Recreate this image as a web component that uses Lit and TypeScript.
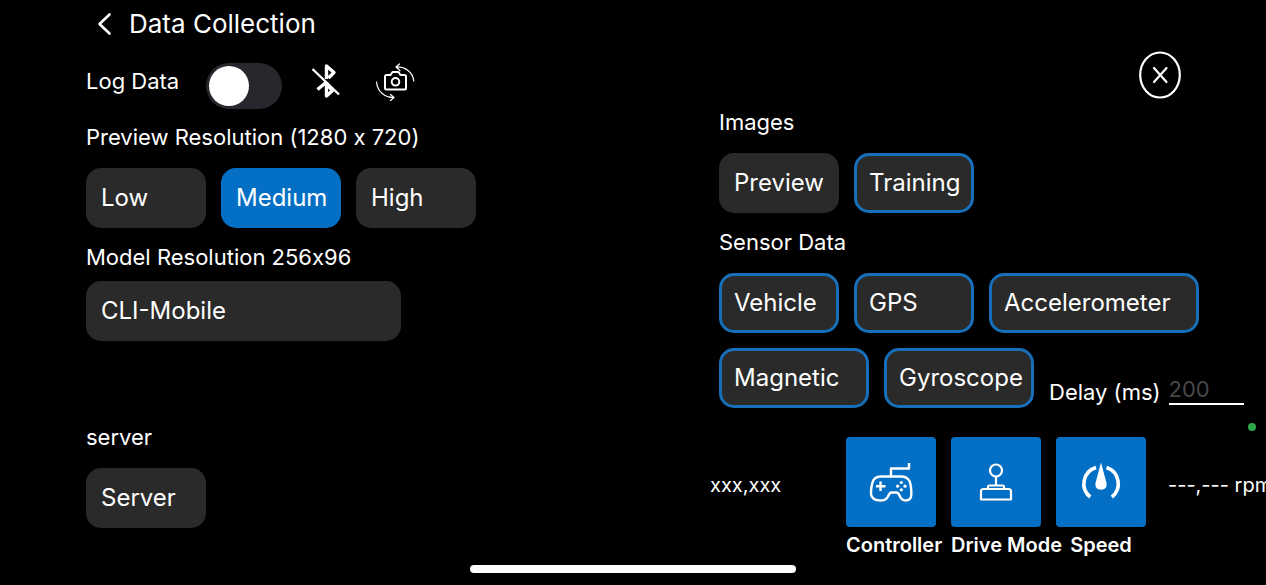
import { LitElement, html, css, svg } from "lit";
import { customElement, property, state } from "lit/decorators.js";
import { classMap } from "lit/directives/class-map.js";

const chevron = html`<svg width="16" height="24" viewBox="0 0 16 24" fill="none" stroke="#fff" stroke-width="2.6" stroke-linecap="round" stroke-linejoin="round" aria-hidden="true"><path d="M13.5 2.500 3.500 12l10 9.500"/></svg>`;

const bluetoothOff = html`<svg width="30" height="36" viewBox="0 0 30 36" fill="none" stroke="#fff" aria-hidden="true">
  <path stroke-width="3.400" stroke-linejoin="round" d="M15.500 16V3l7.500 6.500-5.500 5.500M6.500 26.500l9-7.500M15.500 19V33l6-5.500-5.500-6"/>
  <path stroke-width="2.400" d="M1.500 6 28 31.500"/>
</svg>`;

const cameraFlip = html`<svg width="40" height="38" viewBox="0 0 40 38" fill="none" stroke="#fff" stroke-linecap="round" stroke-linejoin="round" aria-hidden="true">
  <path stroke-width="2" d="M11.500 12h4l2-3h6l2 3h4q1.500 0 1.500 1.500V25q0 1.500-1.500 1.500h-18Q10 26.500 10 25V13.500Q10 12 11.500 12Z"/>
  <circle cx="20.500" cy="18.800" r="3.800" stroke-width="2"/>
  <path stroke-width="1.200" d="M24.500 1 21 4l4 3.500M21 4c9-.5 17 5 17.800 14M1.500 19c1 10 8.500 15.500 17 15.500M15.500 31.500l3.500 3-3.500 3"/>
</svg>`;

const closeRing = html`<svg width="44" height="48" viewBox="0 0 44 48" fill="none" stroke="#fff" stroke-width="2.200" stroke-linecap="round" aria-hidden="true">
  <ellipse cx="22" cy="24" rx="19.800" ry="22.500"/><path d="m16 17 12.500 14M28.500 17 16 31"/>
</svg>`;

const gamepad = svg`<g fill="none" stroke="#fff" stroke-width="2.400" stroke-linejoin="round">
  <path d="M45 40V31.500H63V26"/>
  <path d="M35 39.500H55Q61 39.500 63.500 44Q65.500 49 65.300 58Q65 63.500 59.500 63.500Q56 63.500 54 59.500Q52.500 55.500 50.500 55.500H45.500Q43.500 55.500 42 59.500Q40 63.500 35 63.500Q25.500 63.500 25 57Q25 48 27.500 43Q30 39.500 35 39.500Z"/>
  <path d="M34.500 44.500v9.500M30 49.200h9.500"/>
</g><g fill="#fff"><circle cx="55.300" cy="45.500" r="1.600"/><circle cx="55.300" cy="52.800" r="1.600"/><circle cx="51.600" cy="49.200" r="1.600"/><circle cx="59" cy="49.200" r="1.600"/></g>`;

const joystick = svg`<g fill="none" stroke="#fff" stroke-width="2.200" stroke-linejoin="round">
  <circle cx="45" cy="33.500" r="6"/><path d="M45 39.500v8.500"/>
  <path d="M37 52v-2q0-1.500 1.500-1.500h13q1.500 0 1.500 1.500v2"/>
  <path d="M30 62.500V54.500q0-2.500 2.500-2.500h25q2.500 0 2.500 2.500v8Z"/>
</g>`;

const gauge = svg`<path fill="none" stroke="#fff" stroke-width="3.600" d="M40 30.500A17 17 0 0 0 34.200 60M50.500 30.500A17 17 0 0 1 55.800 60"/>
<path fill="#fff" d="M45 25.500 50.500 46q1 6.500-5.500 6.700-6.500-.2-5.500-6.700Z"/>`;

@customElement("option-chip")
class OptionChip extends LitElement {
  @property() label = "";
  @property() mode: "plain" | "filled" | "outlined" = "plain";
  @property() size = "small";

  static styles = css`
    :host { display: block; flex: none; }
    .chip {
      display: block; box-sizing: border-box; height: 60px;
      padding: 0 0 0 12px; border: 3px solid #2a2a2a; border-radius: 15px;
      background: #2a2a2a; color: #fff; font: 400 24px/30px Inter, sans-serif;
      text-align: left; white-space: nowrap; cursor: pointer;
    }
    .small { width: 120px; }
    .medium { width: 150px; }
    .large { width: 210px; }
    .filled { background: #0470c5; border-color: #0470c5; }
    .outlined { border-color: #166fb8; }
  `;

  render() {
    const classes = { chip: true, [this.size]: true, [this.mode]: true };
    return html`<button class=${classMap(classes)} aria-pressed=${this.mode !== "plain"}>${this.label}</button>`;
  }
}

@customElement("control-tile")
class ControlTile extends LitElement {
  @property() label = "";
  @property({ attribute: false }) icon: unknown;

  static styles = css`
    :host { display: block; width: 90px; flex: none; }
    .tile {
      display: grid; gap: 5px; width: 90px; padding: 0; border: 0; background: none;
      color: #fff; font: 600 20px/26px Inter, sans-serif; cursor: pointer;
    }
    .face { display: block; width: 90px; height: 90px; border-radius: 4px; background: #0470c5; }
    .name { white-space: nowrap; text-align: center; }
  `;

  render() {
    return html`<button class="tile">
      <svg class="face" viewBox="0 0 90 90" aria-hidden="true">${this.icon}</svg>
      <span class="name">${this.label}</span>
    </button>`;
  }
}

@customElement("app-root")
class AppRoot extends LitElement {
  @state() private resolution = "Medium";
  @state() private enabled = new Set(["Training", "Vehicle", "GPS", "Accelerometer", "Magnetic", "Gyroscope"]);

  static styles = css`
    :host {
      display: block; position: relative; min-height: 100vh; overflow: hidden;
      background: #000; color: #fff; font: 400 22px/26px Inter, sans-serif;
      font-feature-settings: "calt" 0;
    }
    .bar { display: flex; align-items: center; gap: 17px; height: 48px; padding-left: 96px; }
    .icon { display: block; padding: 0; border: 0; background: none; cursor: pointer; }
    .icon svg { display: block; }
    .title { margin: 0; font-size: 26px; line-height: 30px; font-weight: 400; }
    .columns { display: grid; grid-template-columns: minmax(0, 1fr) minmax(0, 1fr); }
    .column { padding-left: 86px; }
    .log { display: flex; align-items: flex-start; margin-top: 15px; margin-bottom: 15px; }
    .log-label { line-height: 36px; margin-right: 27px; }
    .switch {
      appearance: none; flex: none; width: 76px; height: 46px; margin: 0 29px 0 0; padding: 3px;
      border-radius: 23px; background: #28272e; cursor: pointer;
    }
    .switch::before { content: ""; display: block; width: 40px; height: 40px; border-radius: 50%; background: #fff; }
    .switch:checked::before { margin-left: 30px; }
    .bluetooth { margin-right: 34px; }
    .heading { display: block; margin: 0; font-size: 22px; line-height: 26px; font-weight: 400; }
    .chips { display: flex; flex-wrap: wrap; gap: 15px; margin: 18px 0 16px; }
    .model {
      appearance: none; display: block; width: 315px; height: 60px; margin: 11px 0 83px; padding: 0 15px;
      border: 0; border-radius: 15px; background: #2a2a2a; color: #fff; font: 400 24px/30px Inter, sans-serif;
    }
    .top { display: flex; justify-content: flex-end; height: 61px; padding-right: 84px; }
    .top .icon { align-self: flex-start; padding-top: 3px; }
    .sensors { margin-bottom: 29px; }
    .delay { display: flex; align-self: flex-end; align-items: flex-end; gap: 8px; padding-bottom: 3px; white-space: nowrap; }
    .delay-input {
      box-sizing: border-box; width: 75px; height: 30px; padding: 0; border: 0; border-bottom: 2px solid #fff;
      border-radius: 0; background: none; color: #fff; font: 400 22px/26px Inter, sans-serif;
    }
    .delay-input::placeholder { color: #47474a; opacity: 1; }
    .status { display: grid; grid-template-columns: 136px auto auto; justify-content: start; margin-left: -9px; font-size: 20px; white-space: nowrap; }
    .reading { line-height: 96px; }
    .tiles { display: flex; gap: 15px; margin-right: 22px; }
    .camera-dot { position: absolute; right: 10px; top: 423px; width: 8px; height: 8px; border-radius: 50%; background: #2fa84c; }
    .home { position: absolute; left: 50%; bottom: 12px; width: 326px; height: 8px; border-radius: 4px; background: #fff; transform: translateX(-50%); }
  `;

  private toggle(name: string) {
    const next = new Set(this.enabled);
    if (!next.delete(name)) next.add(name);
    this.enabled = next;
  }

  private sensor(name: string, size = "small") {
    return html`<option-chip label=${name} size=${size} mode=${this.enabled.has(name) ? "outlined" : "plain"}
      @click=${() => this.toggle(name)}></option-chip>`;
  }

  render() {
    return html`
      <header class="bar">
        <button class="icon" aria-label="Back">${chevron}</button>
        <h1 class="title">Data Collection</h1>
      </header>
      <main class="columns">
        <section class="column">
          <div class="log">
            <label class="log-label" for="log">Log Data</label>
            <input class="switch" id="log" type="checkbox" role="switch">
            <button class="icon bluetooth" aria-label="Bluetooth">${bluetoothOff}</button>
            <button class="icon" aria-label="Switch camera">${cameraFlip}</button>
          </div>
          <h2 class="heading">Preview Resolution (1280 x 720)</h2>
          <div class="chips">
            ${["Low", "Medium", "High"].map((name) => html`<option-chip label=${name}
              mode=${this.resolution === name ? "filled" : "plain"} @click=${() => (this.resolution = name)}></option-chip>`)}
          </div>
          <label class="heading" for="model">Model Resolution 256x96</label>
          <select class="model" id="model"><option>CLI-Mobile</option></select>
          <h2 class="heading">server</h2>
          <div class="chips"><option-chip label="Server"></option-chip></div>
        </section>
        <section class="column">
          <div class="top"><button class="icon" aria-label="Close">${closeRing}</button></div>
          <h2 class="heading">Images</h2>
          <div class="chips">${this.sensor("Preview")}${this.sensor("Training")}</div>
          <h2 class="heading">Sensor Data</h2>
          <div class="chips sensors">
            ${this.sensor("Vehicle")}${this.sensor("GPS")}${this.sensor("Accelerometer", "large")}
            ${this.sensor("Magnetic", "medium")}${this.sensor("Gyroscope", "medium")}
            <div class="delay">
              <label for="delay">Delay (ms)</label>
              <input class="delay-input" id="delay" type="text" inputmode="numeric" placeholder="200">
            </div>
          </div>
          <div class="status">
            <span class="reading">xxx,xxx</span>
            <div class="tiles">
              <control-tile label="Controller" .icon=${gamepad}></control-tile>
              <control-tile label="Drive Mode" .icon=${joystick}></control-tile>
              <control-tile label="Speed" .icon=${gauge}></control-tile>
            </div>
            <span class="reading">---,--- rpm</span>
          </div>
        </section>
      </main>
      <div class="camera-dot"></div>
      <div class="home"></div>
    `;
  }
}
